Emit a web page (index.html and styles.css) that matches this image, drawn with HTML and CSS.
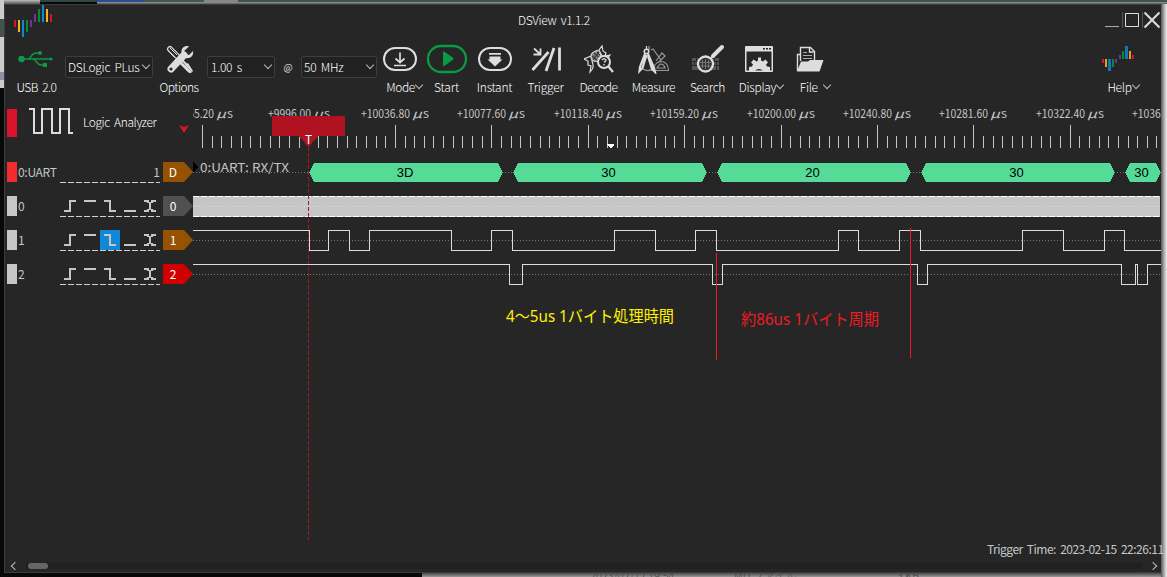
FILE: index.html
```
<!DOCTYPE html>
<html lang="en">
<head>
<meta charset="utf-8">
<title>DSView v1.1.2</title>
<link rel="stylesheet" href="styles.css">
</head>
<body>
<div class="desktop">
  <div class="behind"><span class="b-date">2023/02/12 19:54</span><span class="b-type">MD ファイル</span><span class="b-size">3 KB</span></div>
  <div class="window">
    <header class="titlebar">
      <svg class="logo" width="40" height="34" viewBox="14 4 40 34" shape-rendering="crispEdges">
        <path fill="#d9142a" d="M14 20h2v7h-2zM50 14h2v8h-2z"/><path fill="#f7b21b" d="M18 20h2v12h-2zM46 9h2v13h-2z"/><path fill="#0f86d6" d="M22 20h2v17h-2zM42 5h2v17h-2z"/><path fill="#0b8a33" d="M26 20h2v12h-2zM38 9h2v13h-2z"/><path fill="#70339a" d="M30 20h2v7h-2zM34 14h2v8h-2z"/>
      </svg>
      <h1 class="title">DSView v1.1.2</h1>
      <svg class="controls" width="58" height="20" viewBox="1104 10 58 20" fill="none" stroke="#dedede">
        <path stroke="#aaa" d="M1105 26.5h14"/><path stroke="#555" d="M1122.5 12v16M1142.500 12v16"/><path d="M1125.500 13.500h13v13h-13z"/><path stroke-width="2" d="M1144.500 12.500l15 15M1159.500 12.500l-15 15"/>
      </svg>
    </header>

    <nav class="toolbar">
      <div class="tool usb">
        <svg width="36" height="30" viewBox="18 44 36 30" fill="none" stroke="#0b9a46" stroke-width="1.500"><circle cx="22.500" cy="59" r="3.200" fill="#0b9a46" stroke="none"/><path d="M23 59h28M29 59c3 0 3-6 8-6h3M34 59c3 0 4 6 8 6h3"/><circle cx="41" cy="53" r="2" fill="#0b9a46" stroke="none"/><path d="M44 63h4v4h-4zM51 57l3.500 2-3.500 2z" fill="#0b9a46" stroke="none"/></svg>
        <span class="label">USB 2.0</span></div>
      <div class="combo"><span class="c-device">DSLogic PLus</span><i class="chev"></i></div>
      <div class="tool opts">
        <svg width="28" height="30" viewBox="166 44 28 30"><path d="M170 49l7 7M181 61l9 9" stroke="#ddd" stroke-width="6" stroke-linecap="round"/><path d="M170 49l7 7" stroke="#262626" stroke-width="3.500" stroke-linecap="round"/><path d="M168 50l6 7M170 48l7 7" stroke="#ddd" stroke-width="1"/><path d="M179 59l15 15 0-7-9-9z" fill="#262626"/><path d="M181 59l7 7" stroke="#ddd" stroke-width="2"/><path d="M185 65l3-2 5 8-1 1z" fill="#ddd"/><path d="M171 69l13-14" stroke="#ddd" stroke-width="7" stroke-linecap="round"/><path d="M189 46.500c-5-2-9 3-7 7.500l4 4c4 1 8-2 7-7l-4 4-4-1-1-3z" fill="#ddd"/><circle cx="171" cy="69" r="1.600" fill="#262626"/></svg>
        <span class="label">Options</span></div>
      <div class="combo"><span class="c-time">1.00 s</span><i class="chev"></i></div>
      <span class="at">@</span>
      <div class="combo"><span class="c-rate">50 MHz</span><i class="chev"></i></div>
      <div class="tool mode">
        <svg width="40" height="30" viewBox="0 0 40 30" fill="none" stroke="#ddd" stroke-width="2"><rect x="4" y="4" width="32" height="22" rx="11"/><path stroke-width="1.700" d="M20 8.500v10M15.500 14.500l4.500 4 4.500-4M14 21.500h12"/></svg>
        <span class="label">Mode<i class="chev"></i></span></div>
      <div class="tool start">
        <svg width="42" height="30" viewBox="0 0 42 30"><rect x="2" y="2" width="38" height="26" rx="13" fill="none" stroke="#0b9a46" stroke-width="2.300"/><path fill="#0b9a46" d="M17 8.500q0-1.500 1.500-.8l8.500 6q1 1 0 2l-8.500 6q-1.500.7-1.500-.8z"/></svg>
        <span class="label">Start</span></div>
      <div class="tool instant">
        <svg width="40" height="30" viewBox="0 0 40 30"><rect x="4" y="4" width="32" height="22" rx="11" fill="none" stroke="#ddd" stroke-width="2"/><path fill="#ddd" d="M14 9h12v1.700H14zM14.500 12.500h11v3h2l-7.500 7-7.500-7h2z"/></svg>
        <span class="label">Instant</span></div>
      <div class="tool trig">
        <svg width="32" height="30" viewBox="530 44 32 30" fill="none" stroke="#ddd" stroke-width="2.200"><path d="M532.500 70l16-18M546 71l8-23M559.500 47.500v23" stroke-width="2.800"/><path stroke-width="1.800" d="M534 48.500l6 5.500M540.500 48.500v6h-7"/></svg>
        <span class="label">Trigger</span></div>
      <div class="tool dec">
        <svg width="30" height="30" viewBox="583 44 30 30" fill="none" stroke="#ccc" stroke-width="1.200"><path stroke="#ddd" d="M590 55q4-5 9-5M600 61q3-2 4-6M598 50l3-4 1 5 3 2-1 3 5-1q-3 5-7 3zM590 56l-7 3 4 2v4l3 1-1 6q4-4 3-7z"/><circle cx="595" cy="56.500" r="5" fill="#777"/><path stroke="#262626" stroke-width="1" d="M591 56l6 5M593 53l7 6M596 52l3 3M592 60l6-8"/><circle cx="603" cy="62" r="6" fill="#262626" stroke="#ddd" stroke-width="2"/><path d="M607 66l5 6" stroke="#ddd" stroke-width="2.200"/><path d="M601 60q2-2.500 4 0 0 1-2 2.500M603 64v1.500" stroke-width="1.500"/></svg>
        <span class="label">Decode</span></div>
      <div class="tool meas">
        <svg width="34" height="30" viewBox="637 44 34 30" fill="none" stroke="#999" stroke-width="1.200"><path d="M649 50v-4M643 69q6 4 12-2M651 50l2-1 8 11M656 61l6-8 3 3-6 6"/><path d="M652 70.500h16.500q0-9-8.500-9-5 1-8 9zM657 68h8q-1-4-5-4z"/><circle cx="646.500" cy="51.500" r="2.200" stroke="#ddd" stroke-width="1.600"/><path stroke="#ddd" stroke-width="2.200" d="M645 54l-5 13-.5 4 3-3 4-13M648 54l6 14 1 4-3-3-4-13"/><path stroke="#ddd" d="M646.500 46v4"/></svg>
        <span class="label">Measure</span></div>
      <div class="tool sear">
        <svg width="34" height="30" viewBox="691 44 34 30"><path fill="#555" d="M692 58h27v12h-27z"/><path stroke="#262626" d="M692 61.500h27M692 65.500h27M696.500 58v4M714.500 58v4M694.500 62v4M716.500 62v8"/><circle cx="705.500" cy="64" r="7.500" fill="#303030" stroke="#ddd" stroke-width="2.300"/><path d="M702.500 60v8M705.500 59v10M708.500 60v8M700 62.500h11M700 66h11" stroke="#777"/><path d="M711 58l3-3" stroke="#ddd" stroke-width="2"/><path d="M713 56l9-9" stroke="#ddd" stroke-width="4" stroke-linecap="round"/></svg>
        <span class="label">Search</span></div>
      <div class="tool disp">
        <svg width="30" height="30" viewBox="744 44 30 30"><path fill="#ddd" fill-rule="evenodd" d="M746 46h26a1 1 0 0 1 1 1v24a1 1 0 0 1-1 1h-26a1 1 0 0 1-1-1V47a1 1 0 0 1 1-1zM746.500 51.500v19h25v-19z"/><path fill="#262626" d="M763 48h2v1.500h-2zM766 48h2v1.500h-2zM769 48h2v1.500h-2z"/><path fill="#ddd" d="M749 71v-4l3-.5 1-2-2-2 2.500-3 3 2 1.500-1v-3h3v3l2 1 2.500-2 2.500 3-2 2 1 2 3 .5v4h-7a5 5 0 0 0-8 0z"/></svg>
        <span class="label">Display<i class="chev"></i></span></div>
      <div class="tool file">
        <svg width="30" height="30" viewBox="794 44 30 30"><path fill="none" stroke="#ddd" stroke-width="1.400" d="M799.500 61V47.500h10l4 4V60M808.500 48v4h4M796.500 71V54.500h2.500"/><path stroke="#aaa" d="M802 52.500h4M802 55.500h9M802 58.500h9"/><path fill="#ddd" d="M796 71.500l4-10h7l2-1.500h13.500l-4 11.500z"/></svg>
        <span class="label">File <i class="chev"></i></span></div>
      <span class="grow"></span>
      <div class="tool help">
        <svg width="40" height="30" viewBox="1102 44 40 30" shape-rendering="crispEdges"><path fill="#d9142a" d="M1102 59h2v4h-2zM1132 55h2v4h-2z"/><path fill="#e6a31b" d="M1105 59h2v8h-2zM1129 51h2v8h-2z"/><path fill="#0f76bd" d="M1108 59h3v12h-3zM1125 46h3v13h-3z"/><path fill="#0b8a33" d="M1112 59h2v8h-2zM1122 51h2v8h-2z"/><path fill="#70339a" d="M1115 59h2v4h-2zM1119 55h2v4h-2z"/></svg>
        <span class="label">Help<i class="chev"></i></span></div>
    </nav>

    <main class="workspace">
      <aside class="channels">
        <div class="device">
          <i class="bar"></i>
          <svg width="46" height="30" viewBox="28 106 46 30" fill="none" stroke="#ddd" stroke-width="2"><path d="M29 109h5v24h8v-24h10v24h8v-24h9v24h4"/></svg>
          <span class="device-name">Logic Analyzer</span>
          <svg class="flag" width="10" height="8" viewBox="0 0 10 8"><path fill="#d9142a" d="M0 0l5 2 5-2-5 8z"/></svg>
        </div>
        <div class="channel uart"><i class="bar"></i><span class="ch-name">0:UART</span><span class="edges">1</span><b class="tag">D</b></div>
        <div class="channel"><i class="bar"></i><span class="ch-name">0</span><span class="edges"><svg width="100" height="20" viewBox="0 0 100 20"><use href="#edge-set"/></svg></span><b class="tag gray">0</b></div>
        <div class="channel"><i class="bar"></i><span class="ch-name">1</span><span class="edges"><svg width="100" height="20" viewBox="0 0 100 20"><path fill="#1287d8" d="M40 0h20v20H40z"/><g id="edge-set" fill="none" stroke="#c5c6c8" stroke-width="2" shape-rendering="crispEdges"><path d="M4 15h6V5h6M24 5h12M44 5h6v10h6M64 15h12M84 5h4v2M96 5h-4v2M84 15h4v-2M96 15h-4v-2M90 6v8"/></g></svg></span><b class="tag brown">1</b></div>
        <div class="channel"><i class="bar"></i><span class="ch-name">2</span><span class="edges"><svg width="100" height="20" viewBox="0 0 100 20"><use href="#edge-set"/></svg></span><b class="tag red">2</b></div>
      </aside>

      <svg class="plot" width="968" height="436" viewBox="193 105 968 436" shape-rendering="crispEdges">
        <g id="ruler-labels" class="ruler-text"></g>
        <path id="ticks" fill="none" stroke="#c5c6c8"/>
        <path fill="#b01222" d="M272 116h73v20h-27l-9.500 11-9.500-11h-27z"/>
        <path stroke="#b01222" stroke-dasharray="4 2" d="M308.500 147v393"/>
        <text class="trigger-mark" x="308.500" y="144" text-anchor="middle">T</text>
        <path fill="#fff" d="M607 144h7v1l-3 3h-1l-3-3z"/>

        <path stroke="#777" stroke-dasharray="1 2" d="M193 172.500h968M193 240.500h968M193 274.500h968"/>
        <path fill="#000" d="M193 162l6 5-6 5z"/>
        <text class="decoder-text" x="200" y="172" textLength="89" lengthAdjust="spacingAndGlyphs">0:UART: RX/TX</text>
        <g fill="#55da98"><path d="M309 172.500l5-9.500h184l5 9.500-5 9.500H314zM513 172.500l5-9.500h184l5 9.500-5 9.500H518zM717 172.500l5-9.500h184l5 9.500-5 9.500H722zM921 172.500l5-9.500h184l5 9.500-5 9.500H926zM1125 172.500l5-9.500h26l5 9.500-5 9.500h-26z"/></g>
        <g class="byte-text" text-anchor="middle"><text x="405" y="177">3D</text><text x="608.500" y="177">30</text><text x="812.500" y="177">20</text><text x="1016.500" y="177">30</text><text x="1141.500" y="177">30</text></g>

        <path fill="#c5c6c8" d="M193 196h967v21H193z"/>
        <path stroke="#fff" stroke-dasharray="6 2" d="M193 196.500h967M193 216.500h967"/><path stroke="#dcdcdc" stroke-dasharray="1 2" d="M193 206.500h967"/>
        <path fill="none" stroke="#dcdcdc" d="M193 230.500H309.500V250.500H328.500V230.500H349.500V250.500H369.500V230.500H451.500V250.500H491.500V230.500H512.500V250.500H614.500V230.500H655.500V250.500H695.500V230.500H716.500V250.500H838.500V230.500H858.500V250.500H899.500V230.500H920.500V250.500H1022.500V230.500H1063.500V250.500H1104.500V230.500H1124.500V250.500H1161"/>
        <path fill="none" stroke="#dcdcdc" d="M193 264.500H509.500V284.500H522.500V264.500H712.500V284.500H722.500V264.500H917.500V284.500H927.500V264.500H1121.500V284.500H1135.500V264.500H1137.500V284.500H1147.500V264.500H1161"/>
        <path stroke="#b01222" stroke-dasharray="4 2" d="M308.500 195v57"/>
        <path stroke="#ed1c24" d="M716.500 253v107M910.500 228v130"/>
        <text class="note yellow" x="506" y="322" textLength="168" lengthAdjust="spacingAndGlyphs">4～5us 1バイト処理時間</text>
        <text class="note crimson" x="741" y="325" textLength="138" lengthAdjust="spacingAndGlyphs">約86us 1バイト周期</text>
      </svg>
    </main>
    <div class="status">Trigger Time: 2023-02-15 22:26:11</div>
    <div class="scrollbar"><i class="arrow left"></i><div class="track"><i class="thumb"></i></div><i class="arrow right"></i></div>
  </div>
</div>
<script src="app.js"></script>
</body>
</html>
```

FILE: styles.css
```
* { box-sizing: border-box; }
body { margin: 0; overflow: hidden; font: 300 12px/14px "Noto Sans CJK JP", "Noto Sans", sans-serif; color: #e8e8e8; background: #000; }
i { display: block; font-style: normal; }
svg { display: block; flex: none; }
.desktop {
  position: relative; width: 1167px; height: 577px; padding: 4px 6px 4px 4px;
  background:
    linear-gradient(90deg, #2e4644 0 57px, #2b4c96 57px 104px, #3f5a58 104px 164px, #88868a 164px 198px, #40514e 198px) 40px 0 / 1127px 2px no-repeat,
    linear-gradient(#999, #555) 97px 2px / 1070px 2px no-repeat,
    linear-gradient(90deg, #555, #aaa 3px, #eee 6px) 1161px 4px / 6px 573px no-repeat,
    linear-gradient(#333, #999) 422px 572px / 745px 5px no-repeat,
    linear-gradient(#ccc 0 19px, #41524f 19px 37px, #ccc 37px 72px, #988aa0 72px 80px, #ccc 80px 88px, transparent 88px) 0 0 / 4px 100px no-repeat,
    linear-gradient(#bbb, #555) 0 0 / 40px 4px no-repeat,
    #080808;
}
.behind { position: absolute; left: 422px; top: 571px; width: 739px; height: 6px; overflow: hidden; font-size: 11px; line-height: 9px; color: #444; display: flex; }
.b-date { margin-left: 168px; width: 144px; line-height: 8px; }
.b-type { width: 163px; }
.window { position: relative; display: flex; flex-direction: column; width: 1157px; height: 569px; background: #262626; border: 1px solid #3c3c3c; border-right: 0; }

.titlebar { display: flex; height: 33px; flex: none; }
.logo { margin: -1px 0 0 9px; }
.title { flex: 1; margin: 8px 0 0; padding-left: 464px; font-size: 12px; line-height: 14px; font-weight: 300; letter-spacing: -.35px; word-spacing: 2px; color: #fff; }
.controls { margin: 5px -1px 0 0; }

.toolbar { display: flex; height: 67px; flex: none; padding-top: 6px; color: #fff; word-spacing: 2px; }
.tool { display: flex; flex-direction: column; align-items: center; flex: none; }
.label { display: flex; align-items: center; margin-top: 6px; height: 14px; white-space: pre; letter-spacing: -.3px; }
.usb { width: 60px; } .usb .label { padding-left: 3px; letter-spacing: -.5px; }
.opts { width: 54px; } .opts .label { letter-spacing: -.55px; margin-left: -2px; }
.mode { width: 46px; } .mode .label { padding-left: 8px; letter-spacing: -.4px; } .mode .chev { margin-right: 0; }
.start { width: 47px; } .start .label { letter-spacing: -.1px; }
.instant { width: 49px; } .instant .label { letter-spacing: -.3px; }
.trig { width: 53px; } .trig .label { letter-spacing: -.2px; }
.dec { width: 53px; } .dec .label { letter-spacing: -.5px; }
.meas { width: 57px; }
.sear { width: 51px; }
.disp { width: 57px; } .disp svg { margin-left: -5px; }
.file { width: 51px; } .file svg { margin-left: -12px; } .file .chev { margin-left: 2px; }
.help { width: 56px; margin-right: 11px; } .help .label { padding-left: 3px; }
.grow { flex: 1; }
.chev { width: 6px; height: 6px; margin: -4px 1px 0 1px; border: solid #bbb; border-width: 0 1px 1px 0; transform: rotate(45deg); flex: none; }
.combo { display: flex; align-items: center; justify-content: space-between; flex: none; width: 88px; height: 22px; margin-top: 12px; padding: 0 2px; border: 1px solid #3d3d3d; border-radius: 2px; background: #212121; white-space: pre; letter-spacing: -.25px; }
.opts + .combo { width: 68px; padding-left: 3px; }
.at + .combo { width: 76px; }
.at { width: 26px; margin-top: 16px; text-align: center; font-size: 10px; }

.workspace { display: flex; height: 436px; flex: none; }
.channels { width: 188px; flex: none; color: #c5c6c8; }
.device { display: flex; height: 57px; padding-left: 2px; }
.device .bar { width: 10px; height: 28px; margin: 4px 11px 0 0; background: #d9142a; }
.device svg { margin-top: 1px; }
.device-name { width: 96px; padding: 10px 0 0 9px; color: #fff; letter-spacing: -.4px; word-spacing: 2px; white-space: nowrap; }
.device .flag { margin: 20px 0 0 9px; }
.channel { display: flex; height: 20px; margin: 0 0 14px 2px; line-height: 20px; font-weight: 400; }
.channel .bar { width: 10px; background: #c5c6c8; margin-right: 1px; }
.uart .bar { background: #f42b2e; }
.ch-name { width: 42px; letter-spacing: -.3px; }
.edges { width: 100px; height: 21px; margin-right: 3px; text-align: right; background: repeating-linear-gradient(90deg, #d0d0d0 0 6px, transparent 6px 8px) 0 100% / 100% 1px no-repeat; }
.tag { width: 30px; padding-right: 10px; text-align: center; font-size: 12px; font-weight: 400; color: #fff; background: #965200; clip-path: polygon(0 0, 70% 0, 100% 50%, 70% 100%, 0 100%); }
.tag.gray { background: #505050; }
.tag.red { background: #d00000; }
.ruler-text { fill: #c5c6c8; font-size: 11.5px; font-weight: 400; }
.mu { font-style: italic; }
.trigger-mark { fill: #fff; font-size: 12px; font-weight: 400; }
.decoder-text { fill: #c5c6c8; font-size: 12px; font-weight: 400; }
.byte-text { fill: #000; font: 13px "Liberation Sans", sans-serif; }
.note { font: 16px "Noto Sans", "Noto Sans CJK JP", sans-serif; }
.yellow { fill: #fff200; }
.crimson { fill: #ed1c24; }

.status { align-self: flex-end; margin: 1px 0 1px; width: 174px; height: 14px; font-size: 12px; font-weight: 400; letter-spacing: -.5px; word-spacing: 2px; color: #c5c6c8; white-space: nowrap; }
.scrollbar { display: flex; align-items: center; height: 10px; margin-top: 4px; padding: 0 5px 0 7px; }
.track { flex: 1; height: 6px; margin: 0 8px; background: #202020; }
.thumb { width: 20px; height: 6px; margin-left: 2px; border-radius: 3px; background: #666; }
.arrow { width: 6px; height: 6px; border: solid #bbb; border-width: 1px 1px 0 0; transform: rotate(45deg); }
.arrow.left { transform: rotate(-135deg); }
```

FILE: app.js
```
const labels = ["+9955.20", "+9996.00", "+10036.80", "+10077.60", "+10118.40", "+10159.20", "+10200.00", "+10240.80", "+10281.60", "+10322.40", "+10363.20"];
const group = document.getElementById("ruler-labels");
const origin = 202.6, step = 9.64;
let path = "";
for (let n = -1; n <= 99; n++) {
  const x = Math.floor(origin + n * step) + 0.5;
  if (x < 1161) path += `M${x} ${n % 10 === 0 ? 125 : 136}V148`;
}
document.getElementById("ticks").setAttribute("d", path);

function addText(x, width, content, name) {
  const text = document.createElementNS("http://www.w3.org/2000/svg", "text");
  text.setAttribute("x", x);
  text.setAttribute("y", 118);
  text.setAttribute("textLength", width);
  text.setAttribute("lengthAdjust", "spacingAndGlyphs");
  if (name) text.setAttribute("class", name);
  text.textContent = content;
  group.appendChild(text);
}

labels.forEach((label, i) => {
  const width = i < 2 ? 61 : 67;
  const start = Math.round(origin + i * 96.4 - width / 2) - 1;
  addText(start, width - 18, label);
  addText(start + width - 16, 10, "μ", "mu");
  addText(start + width - 5, 6, "s");
});
```
